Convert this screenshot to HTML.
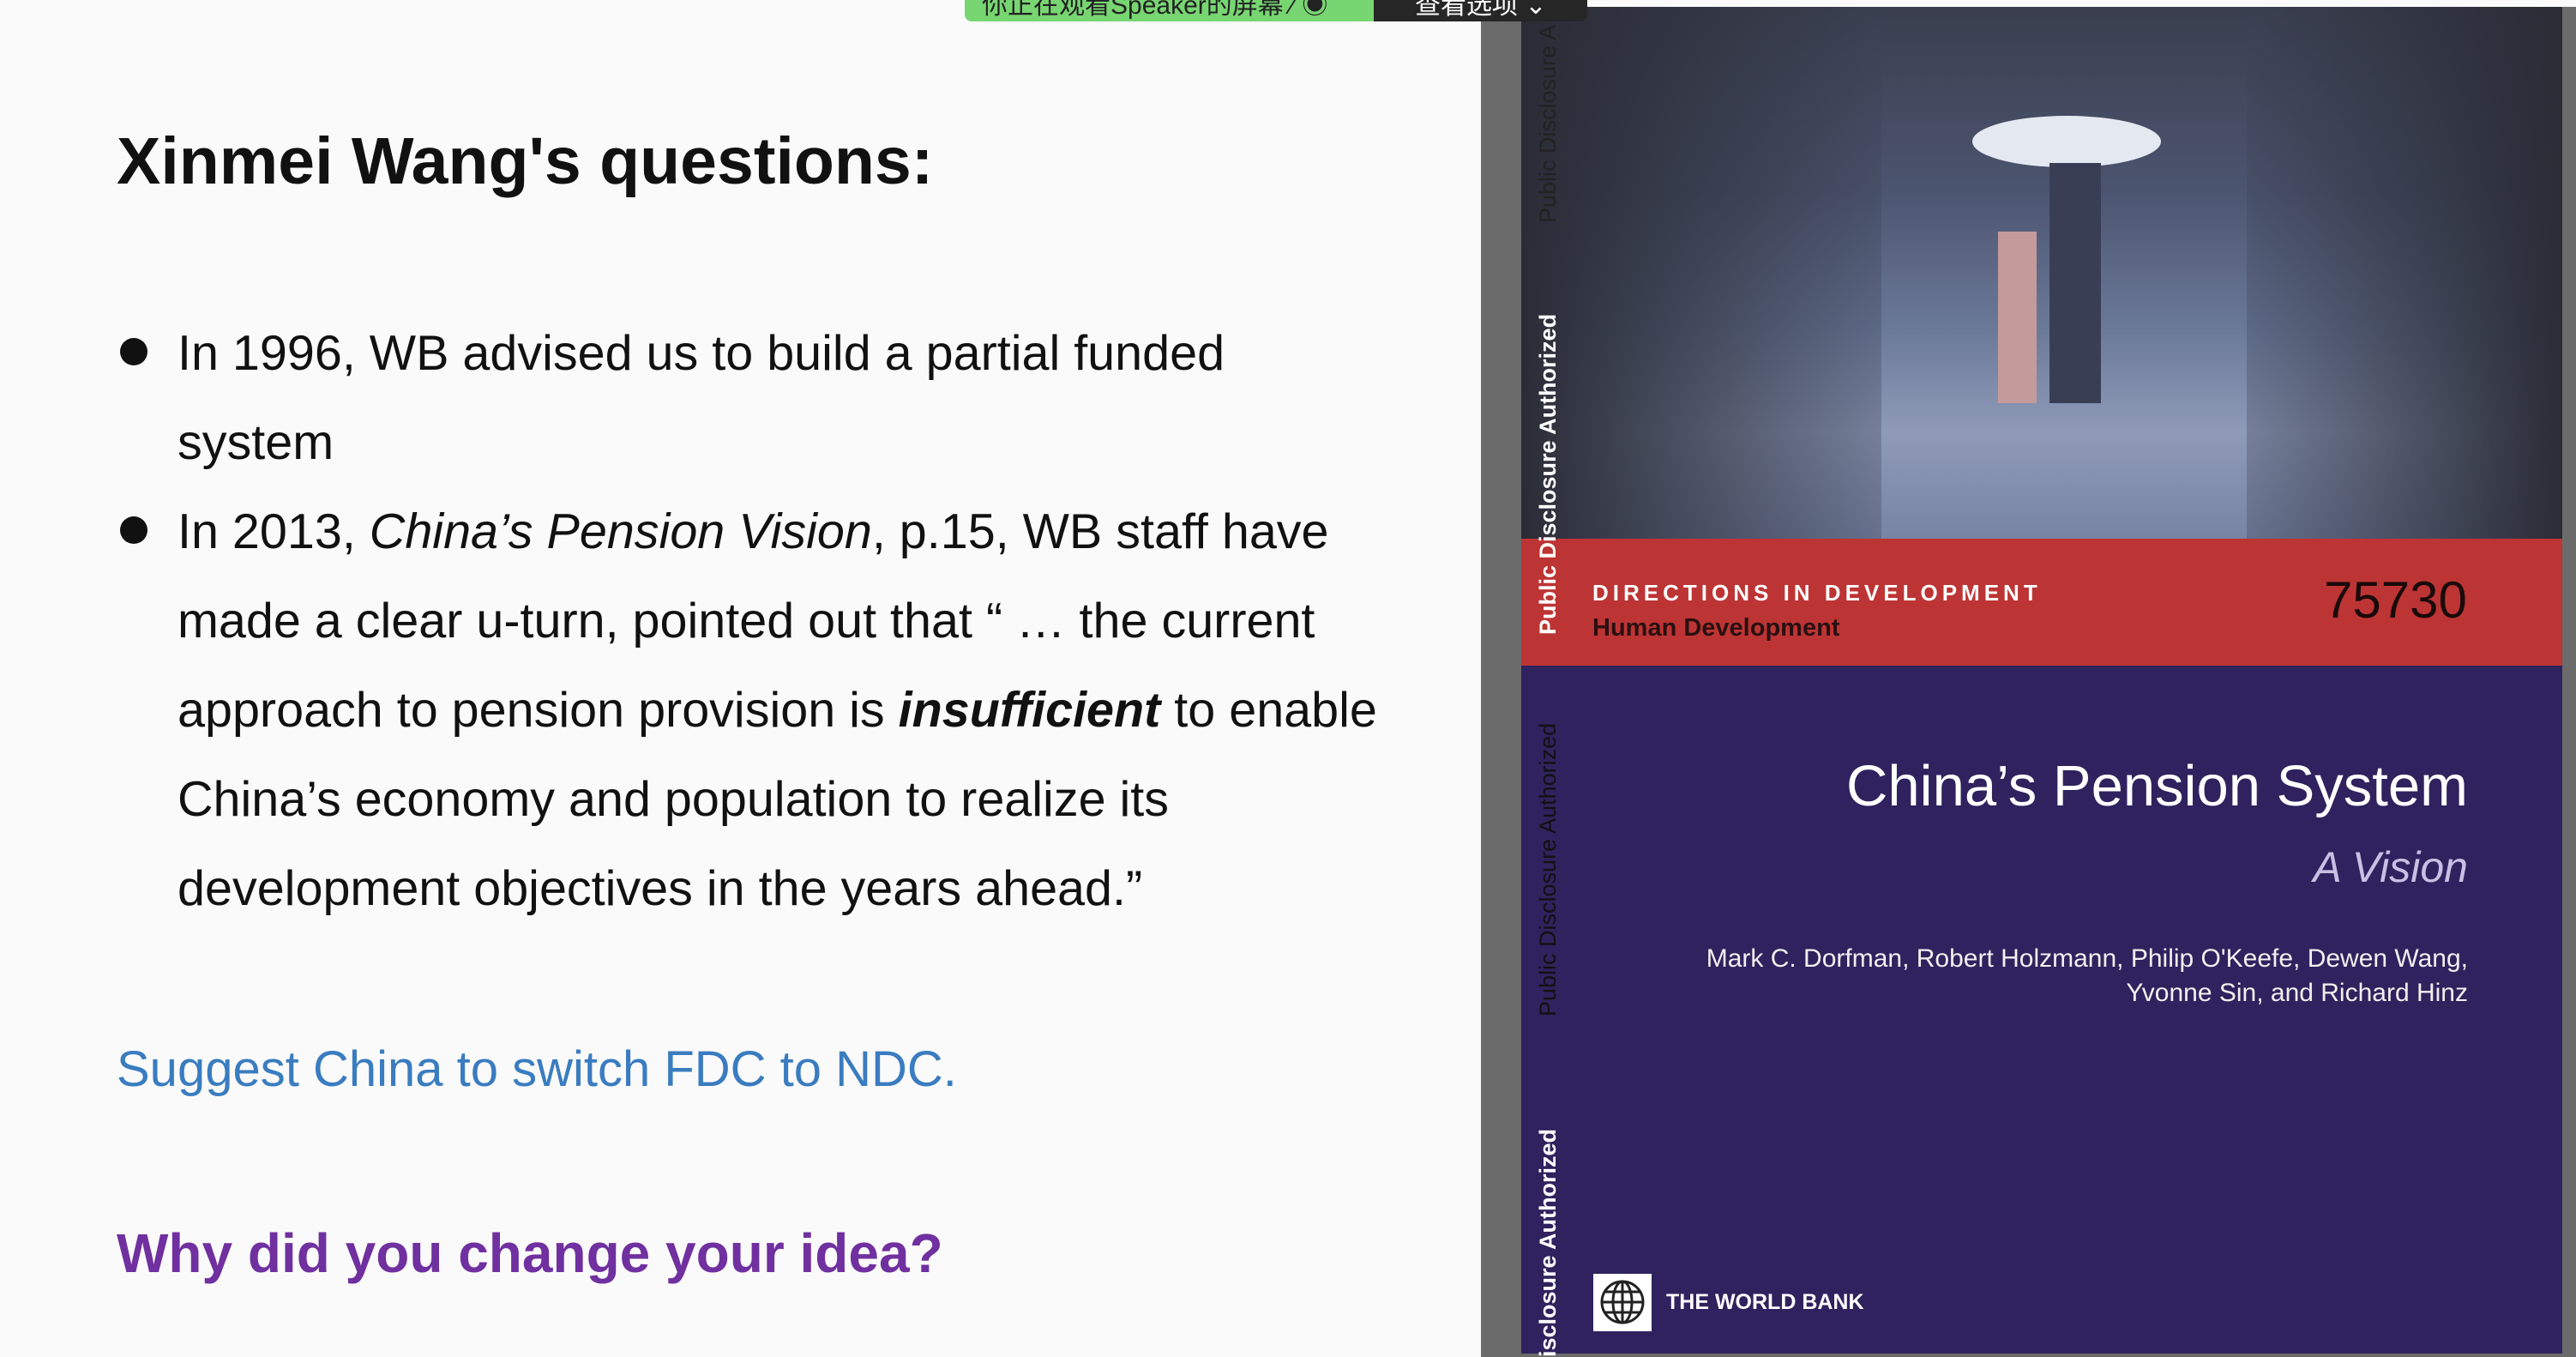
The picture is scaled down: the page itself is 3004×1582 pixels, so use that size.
<!DOCTYPE html>
<html><head><meta charset="utf-8"><style>
*{margin:0;padding:0;box-sizing:border-box}
body{width:3004px;height:1582px;position:relative;overflow:hidden;background:#fafafa;font-family:"Liberation Sans","Noto Sans CJK SC",sans-serif}
.a{position:absolute;white-space:nowrap}
.t{font-size:57.5px;color:#111;line-height:1}
.dot{position:absolute;width:32px;height:32px;border-radius:50%;background:#111}
</style></head><body>
<div class="a" style="left:136px;top:144px;font-size:77px;font-weight:bold;color:#111">Xinmei Wang's questions:</div>
<div class="dot" style="left:140px;top:394px"></div>
<div class="dot" style="left:140px;top:602px"></div>
<div class="a t" style="left:207px;top:384px">In 1996, WB advised us to build a partial funded</div>
<div class="a t" style="left:207px;top:488px">system</div>
<div class="a t" style="left:207px;top:592px">In 2013, <i>China’s Pension Vision</i>, p.15, WB staff have</div>
<div class="a t" style="left:207px;top:696px">made a clear u-turn, pointed out that “ … the current</div>
<div class="a t" style="left:207px;top:800px">approach to pension provision is <b><i>insufficient</i></b> to enable</div>
<div class="a t" style="left:207px;top:904px">China’s economy and population to realize its</div>
<div class="a t" style="left:207px;top:1008px">development objectives in the years ahead.”</div>
<div class="a" style="left:136px;top:1213px;font-size:58px;color:#3a7cc0">Suggest China to switch FDC to NDC.</div>
<div class="a" style="left:136px;top:1424px;font-size:64px;font-weight:bold;color:#7030a0">Why did you change your idea?</div>

<div class="a" style="left:1727px;top:8px;width:1277px;height:1574px;background:#6b6b6b"></div>
<div class="a" style="left:1774px;top:8px;width:1214px;height:620px;background:linear-gradient(180deg,#3a3e4e 0%,#4c5570 35%,#6a7898 60%,#8e9ab8 80%,#7884a4 100%)"></div>
<div class="a" style="left:1774px;top:8px;width:420px;height:620px;background:linear-gradient(90deg,#2a2c36,rgba(60,66,86,0.3))"></div>
<div class="a" style="left:2620px;top:8px;width:368px;height:620px;background:linear-gradient(270deg,#2a2c36,rgba(60,66,86,0.3))"></div>
<div class="a" style="left:2300px;top:135px;width:220px;height:60px;border-radius:50%;background:#e4e8f0"></div>
<div class="a" style="left:2390px;top:190px;width:60px;height:280px;background:#3a3e55"></div>
<div class="a" style="left:2330px;top:270px;width:45px;height:200px;background:#c49a9a"></div>
<div class="a" style="left:1774px;top:628px;width:1214px;height:148px;background:#bd3434"></div>
<div class="a" style="left:1774px;top:776px;width:1214px;height:802px;background:#30225e"></div>

<div class="a" style="left:1125px;top:0;width:477px;height:25px;background:#78d672;border-radius:0 0 0 8px;font-size:30px;color:#222;line-height:14px;padding-left:20px;overflow:hidden;z-index:5">你正在观看Speaker的屏幕 ⁄ ◉</div>
<div class="a" style="left:1602px;top:0;width:249px;height:25px;background:#262626;border-radius:0 0 8px 0;font-size:30px;color:#fff;line-height:14px;padding-left:48px;overflow:hidden;z-index:5">查看选项 ⌄</div>

<div class="a" style="left:1857px;top:676px;font-size:26px;font-weight:bold;color:#fff;letter-spacing:5px">DIRECTIONS IN DEVELOPMENT</div>
<div class="a" style="left:1857px;top:716px;font-size:29px;font-weight:bold;color:#2a1010">Human Development</div>
<div class="a" style="left:2710px;top:665px;font-size:60px;color:#1a0a0a">75730</div>
<div class="a" style="right:126px;top:878px;font-size:67px;color:#fff">China’s Pension System</div>
<div class="a" style="right:126px;top:982px;font-size:50px;font-style:italic;color:#c8c0e4">A Vision</div>
<div class="a" style="right:126px;top:1098px;font-size:30px;color:#f0f0f0;text-align:right;line-height:40px">Mark C. Dorfman, Robert Holzmann, Philip O'Keefe, Dewen Wang,<br>Yvonne Sin, and Richard Hinz</div>

<div class="a" style="left:1790px;top:740px;font-size:27px;font-weight:bold;color:#fff;transform:rotate(-90deg);transform-origin:left top">Public Disclosure Authorized</div>
<div class="a" style="left:1790px;top:1185px;font-size:27px;color:#111;transform:rotate(-90deg);transform-origin:left top">Public Disclosure Authorized</div>
<div class="a" style="left:1790px;top:1582px;font-size:27px;font-weight:bold;color:#fff;transform:rotate(-90deg);transform-origin:left top">isclosure Authorized</div>
<div class="a" style="left:1790px;top:260px;font-size:27px;color:#222;transform:rotate(-90deg);transform-origin:left top">Public Disclosure A</div>

<div class="a" style="left:1858px;top:1485px;width:68px;height:67px;background:#fff"></div>
<svg class="a" style="left:1862px;top:1488px" width="60" height="60" viewBox="0 0 60 60"><g fill="none" stroke="#222" stroke-width="3"><circle cx="30" cy="30" r="24"/><ellipse cx="30" cy="30" rx="11" ry="24"/><line x1="30" y1="6" x2="30" y2="54"/><line x1="6" y1="30" x2="54" y2="30"/><line x1="10" y1="18" x2="50" y2="18"/><line x1="10" y1="42" x2="50" y2="42"/></g></svg>
<div class="a" style="left:1943px;top:1504px;font-size:25px;font-weight:bold;color:#fff">THE WORLD BANK</div>
</body></html>
